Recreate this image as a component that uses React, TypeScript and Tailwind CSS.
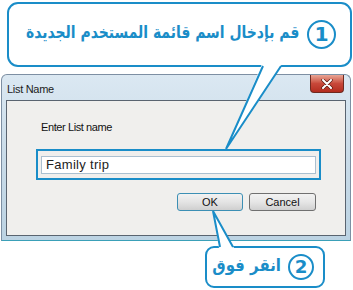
const BLUE = "#1a8dc8";

function Circled({ n, size }: { n: string; size: number }) {
  return (
    <span
      className="inline-flex shrink-0 items-center justify-center rounded-full border-[2.5px] border-[#1a8dc8] font-bold text-[#1a8dc8] leading-none font-['DejaVu_Sans',sans-serif]"
      style={{ width: size, height: size, fontSize: size * 0.7 }}
    >
      {n}
    </span>
  );
}

export default function App() {
  return (
    <div className="relative h-[290px] w-[353px] overflow-hidden bg-white font-['DejaVu_Sans',sans-serif]">
      {/* dialog window */}
      <div className="ml-[1px] mt-[74px] h-[167px] w-[350px] rounded-t-[6px] border border-[#7d8fa3] bg-gradient-to-b from-[#dbe8f2] via-[#c9dbe8] to-[#bcd3e3] border-b-[#3aa0b8]">
        <div className="flex h-[25px] items-start justify-between pl-[5px] pr-[6px]">
          <span className="mt-[6px] text-[11px] tracking-[-0.3px] text-[#1c1c1c] font-['Liberation_Sans',sans-serif]">
            List Name
          </span>
          <div className="flex h-[18px] w-[34px] items-center justify-center rounded-b-[4px] border border-t-0 border-[#6e2a20] bg-gradient-to-b from-[#e8a595] via-[#c8483a] to-[#b32c1f]">
            <svg width="12" height="10" viewBox="0 0 12 10">
              <path d="M2 1 L10 9 M10 1 L2 9" stroke="#5a1a12" strokeWidth="3.4" strokeLinecap="round" />
              <path d="M2 1 L10 9 M10 1 L2 9" stroke="#ffffff" strokeWidth="2" strokeLinecap="round" />
            </svg>
          </div>
        </div>
        <div className="mx-[4px] h-[136px] border border-[#5a6470] bg-[#f0efed] pl-[34px] pr-[29px] pt-[20px] font-['Liberation_Sans',sans-serif]">
          <div className="text-[11px] leading-[13px] tracking-[-0.4px] text-[#111]">Enter List name</div>
          <div className="mt-[22px] flex h-[18px] items-center border border-[#abc0d0] bg-white pl-[4px] text-[13px] tracking-[0.3px] text-[#222]">
            Family trip
          </div>
          <div className="mt-[19px] flex justify-end gap-[6px]">
            <button className="h-[18px] w-[66px] rounded-[3px] border border-[#3c8fb4] bg-gradient-to-b from-[#f2f2f2] via-[#e4e4e4] to-[#cfcfcf] text-[11px] leading-none text-[#111]">
              OK
            </button>
            <button className="h-[18px] w-[67px] rounded-[3px] border border-[#707070] bg-gradient-to-b from-[#f2f2f2] via-[#e6e6e6] to-[#d0d0d0] text-[11px] leading-none text-[#111]">
              Cancel
            </button>
          </div>
        </div>
      </div>

      {/* highlight around the text box */}
      <div className="absolute left-[36px] top-[149px] h-[31px] w-[285px] border-2 border-[#1a8dc8]" />

      {/* top callout */}
      <div
        dir="rtl"
        className="absolute left-[7px] top-[2px] flex h-[65px] w-[345px] items-center gap-[8px] rounded-[11px] border-2 border-[#1a8dc8] bg-white pr-[14px] text-[#1a8dc8]"
      >
        <Circled n="1" size={29} />
        <span className="mb-[3px] origin-right scale-x-[0.82] whitespace-nowrap text-[17px] font-bold">
          قم بإدخال اسم قائمة المستخدم الجديدة
        </span>
      </div>

      {/* bottom callout */}
      <div
        dir="rtl"
        className="absolute left-[205px] top-[246px] flex h-[42px] w-[120px] items-center gap-[7px] rounded-[9px] border-2 border-[#1a8dc8] bg-white pr-[9px] text-[#1a8dc8]"
      >
        <Circled n="2" size={26} />
        <span className="mb-[3px] origin-right scale-x-[0.88] whitespace-nowrap text-[17px] font-bold">انقر فوق</span>
      </div>

      {/* pointers */}
      <svg className="pointer-events-none absolute left-0 top-0" width="353" height="290" viewBox="0 0 353 290">
        <polygon points="262,64 226,149 282,64" fill="#ffffff" />
        <polyline points="263,66 226,149 281,66" fill="none" stroke={BLUE} strokeWidth="2" />
        <polygon points="219,248 213,211 234,248" fill="#ffffff" />
        <polyline points="220,247 213,211 233,247" fill="none" stroke={BLUE} strokeWidth="2" />
      </svg>
    </div>
  );
}
